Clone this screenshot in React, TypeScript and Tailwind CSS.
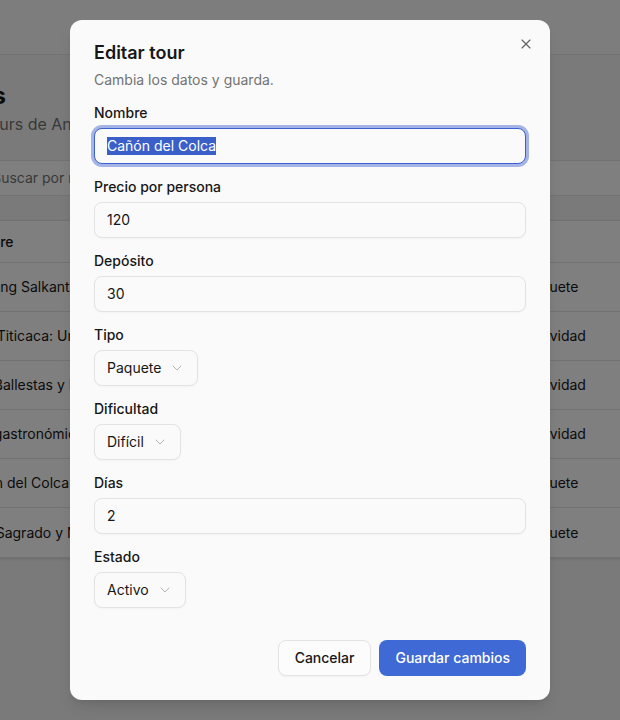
import React from "react";
import { X, ChevronDown } from "lucide-react";

const rows = [
  { name: "Trekking Salkantay 5 días", tipo: "Paquete" },
  { name: "Lago Titicaca: Uros y Taquile", tipo: "Actividad" },
  { name: "Islas Ballestas y Paracas", tipo: "Actividad" },
  { name: "Tour gastronómico en Lima", tipo: "Actividad" },
  { name: "Cañón del Colca", tipo: "Paquete" },
  { name: "Valle Sagrado y Machu Picchu", tipo: "Paquete" },
];

function Field({ label, children }: { label: string; children: React.ReactNode }) {
  return (
    <div className="flex flex-col gap-2">
      <label className="text-sm leading-none font-medium text-[#171717]">{label}</label>
      {children}
    </div>
  );
}

function TextInput({ value }: { value: string }) {
  return (
    <div className="h-9 w-full rounded-lg border border-[#e3e3e3] bg-[#fafafa] px-3 flex items-center text-sm text-[#171717] shadow-[0_1px_2px_rgba(0,0,0,0.03)]">
      {value}
    </div>
  );
}

function SelectTrigger({ value }: { value: string }) {
  return (
    <div className="self-start h-9 rounded-lg border border-[#e3e3e3] bg-[#fafafa] pl-3 pr-3 flex items-center gap-2 text-sm text-[#171717] shadow-[0_1px_2px_rgba(0,0,0,0.03)]">
      <span>{value}</span>
      <ChevronDown className="w-4 h-4 text-[#b5b5b5]" strokeWidth={1.5} />
    </div>
  );
}

export default function App() {
  return (
    <div className="relative h-[720px] w-full overflow-hidden bg-[#f5f5f5] font-['Inter',sans-serif] text-[#171717]">
      {/* Page behind the dialog */}
      <div className="h-[55px] border-b border-[#e5e5e5] bg-[#fafafa]" />
      <div className="flex flex-col">
        <h1 className="mt-[25px] ml-[-61px] text-2xl leading-8 font-bold whitespace-nowrap">Tours</h1>
        <p className="ml-[-47px] text-base leading-6 text-[#737373] whitespace-nowrap">Tus tours de Andes Trek</p>
        <div className="mt-6 ml-[-40px] h-9 w-[700px] rounded-lg border border-[#e5e5e5] bg-white flex items-center pl-[31px] text-sm text-[#737373]">
          Buscar por nombre...
        </div>
        <div className="mt-6 ml-[-56px] w-[800px] border-y border-[#e5e5e5] bg-white shadow-sm">
          <div className="h-[42px] flex items-center px-4 text-sm font-medium border-b border-[#e5e5e5]">
            <div className="w-[564px]">Nombre</div>
          </div>
          {rows.map((r, i) => (
            <div
              key={i}
              className={`h-[49px] flex items-center px-4 text-sm ${i < rows.length - 1 ? "border-b border-[#e5e5e5]" : ""}`}
            >
              <div className="w-[564px] shrink-0 whitespace-nowrap">{r.name}</div>
              <div className="whitespace-nowrap">{r.tipo}</div>
            </div>
          ))}
        </div>
      </div>

      {/* Overlay */}
      <div className="absolute inset-0 bg-black/50 flex items-center justify-center">
        <div className="relative w-[480px] rounded-xl bg-[#fafafa] p-6 flex flex-col gap-4 shadow-lg">
          <button className="absolute top-4 right-4 text-[#404040] opacity-80">
            <X className="w-4 h-4" strokeWidth={1.75} />
          </button>
          <div className="flex flex-col gap-2">
            <h2 className="text-lg leading-none font-semibold">Editar tour</h2>
            <p className="text-sm leading-5 text-[#737373]">Cambia los datos y guarda.</p>
          </div>

          <div className="flex flex-col gap-4">
            <Field label="Nombre">
              <div className="h-9 w-full rounded-lg border border-[#3d60cf] bg-[#fafafa] px-3 flex items-center text-sm ring-[3px] ring-[#3d60cf]/45">
                <span className="bg-[#3b5fc9] text-white leading-[18px]">Cañón del Colca</span>
              </div>
            </Field>
            <Field label="Precio por persona">
              <TextInput value="120" />
            </Field>
            <Field label="Depósito">
              <TextInput value="30" />
            </Field>
            <Field label="Tipo">
              <SelectTrigger value="Paquete" />
            </Field>
            <Field label="Dificultad">
              <SelectTrigger value="Difícil" />
            </Field>
            <Field label="Días">
              <TextInput value="2" />
            </Field>
            <Field label="Estado">
              <SelectTrigger value="Activo" />
            </Field>
          </div>

          <div className="mt-4 flex justify-end gap-2">
            <button className="h-9 px-4 rounded-lg border border-[#e3e3e3] bg-[#fcfcfc] text-sm font-medium text-[#171717] shadow-[0_1px_2px_rgba(0,0,0,0.04)]">
              Cancelar
            </button>
            <button className="h-9 px-4 rounded-lg bg-[#3f69d4] text-sm font-medium text-white">
              Guardar cambios
            </button>
          </div>
        </div>
      </div>
    </div>
  );
}
